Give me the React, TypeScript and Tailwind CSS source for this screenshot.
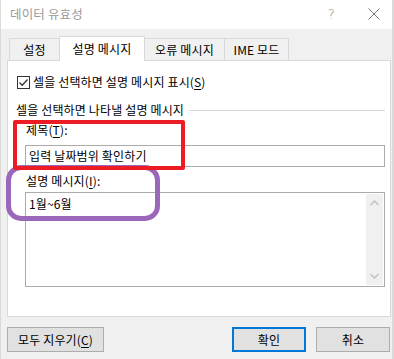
import React from "react"

function Key({ children }: { children: string }) {
  return <span className="underline underline-offset-2">{children}</span>
}

function Tab({ label, active, w }: { label: string; active?: boolean; w: string }) {
  if (active) {
    return (
      <div className={`${w} h-[25px] -mb-px bg-white border border-b-0 border-[#d9d9d9] flex items-center justify-center z-10`}>
        {label}
      </div>
    )
  }
  return (
    <div className={`${w} h-[22px] bg-[#f0f0f0] border border-b-0 border-[#d9d9d9] -ml-px first:ml-0 flex items-center justify-center`}>
      {label}
    </div>
  )
}

export default function App() {
  return (
    <div className="relative w-[394px] h-[359px] overflow-hidden bg-[#f0f0f0] text-[12px] leading-[16px] tracking-[0.15px] text-black [font-family:'Noto_Sans_CJK_KR','Malgun_Gothic',sans-serif] border-l border-r-2 border-[#dadada]">
      {/* title bar */}
      <div className="h-[29px] bg-white flex items-center pl-[9px] pb-[2px]">
        <span className="text-[#9a9a9a] text-[12.5px]">데이터 유효성</span>
        <span className="ml-auto mr-[33px] text-[#8a8a8a] text-[14px] [font-family:'DejaVu_Sans',sans-serif] font-light">?</span>
        <svg width="12" height="12" viewBox="0 0 12 12" className="mr-[12px]">
          <path d="M0.5 0.5 L11.5 11.5 M11.5 0.5 L0.5 11.5" stroke="#777" strokeWidth="1" />
        </svg>
      </div>

      <div className="pt-[7px] pl-[6px] pr-[1px]">
        {/* tabs */}
        <div className="flex items-end pl-[2px] h-[24px]">
          <Tab label="설정" w="w-[51px]" />
          <Tab label="설명 메시지" w="w-[86px] -ml-px" active />
          <Tab label="오류 메시지" w="w-[81px]" />
          <Tab label="IME 모드" w="w-[65px]" />
        </div>

        {/* panel */}
        <div className="h-[257px] bg-white border border-[#d9d9d9] pt-[13px]">
          <div className="flex items-center h-[16px] ml-[9px]">
            <svg width="13" height="13" viewBox="0 0 13 13">
              <rect x="0.5" y="0.5" width="12" height="12" fill="#fff" stroke="#333" />
              <path d="M2.5 6.5 L5.2 9.2 L10.5 3.5" fill="none" stroke="#333" strokeWidth="1.3" />
            </svg>
            <span className="ml-[3px]">셀을 선택하면 설명 메시지 표시(<Key>S</Key>)</span>
          </div>

          <div className="flex items-center h-[16px] mt-[12px] ml-[8px] mr-[5px]">
            <span>셀을 선택하면 나타낼 설명 메시지</span>
            <div className="flex-1 h-px bg-[#d9d9d9] ml-[5px]" />
          </div>

          <div className="h-[16px] mt-[4px] ml-[18px] flex items-center">
            제목(<Key>T</Key>):
          </div>
          <div className="mt-[7px] ml-[17px] w-[360px] h-[22px] border border-[#ababab] flex items-center pl-[3px]">
            입력 날짜범위 확인하기
          </div>

          <div className="h-[16px] mt-[6px] ml-[18px] flex items-center">
            설명 메시지(<Key>I</Key>):
          </div>
          <div className="mt-[3px] ml-[17px] w-[360px] h-[95px] border border-[#ababab] flex">
            <div className="flex-1 pl-[3px] pt-[3px]">1월~6월</div>
            <div className="w-[17px] my-px mr-px bg-[#f0f0f0] flex flex-col items-center justify-between py-[6px]">
              <svg width="9" height="6" viewBox="0 0 9 6">
                <path d="M0.5 5 L4.5 1 L8.5 5" fill="none" stroke="#c2c2c2" strokeWidth="1.5" />
              </svg>
              <svg width="9" height="6" viewBox="0 0 9 6">
                <path d="M0.5 1 L4.5 5 L8.5 1" fill="none" stroke="#c2c2c2" strokeWidth="1.5" />
              </svg>
            </div>
          </div>
        </div>

        {/* buttons */}
        <div className="flex mt-[10px] pr-[1px]">
          <button className="w-[97px] h-[25px] bg-[#e1e1e1] border border-[#adadad] flex items-center justify-center">
            모두 지우기(<Key>C</Key>)
          </button>
          <button className="ml-auto w-[74px] h-[25px] bg-[#e1e1e1] border-2 border-[#0078d7] flex items-center justify-center">
            확인
          </button>
          <button className="ml-[10px] w-[74px] h-[25px] bg-[#e1e1e1] border border-[#adadad] flex items-center justify-center">
            취소
          </button>
        </div>
      </div>

      {/* annotations */}
      <div className="absolute left-[5px] top-[165px] w-[154px] h-[56px] rounded-[15px] border-[5px] border-[#9b67bb]" />
      <div className="absolute left-[12px] top-[120px] w-[172px] h-[50px] rounded-[2px] border-[4px] border-[#ec1c24]" />
    </div>
  )
}
